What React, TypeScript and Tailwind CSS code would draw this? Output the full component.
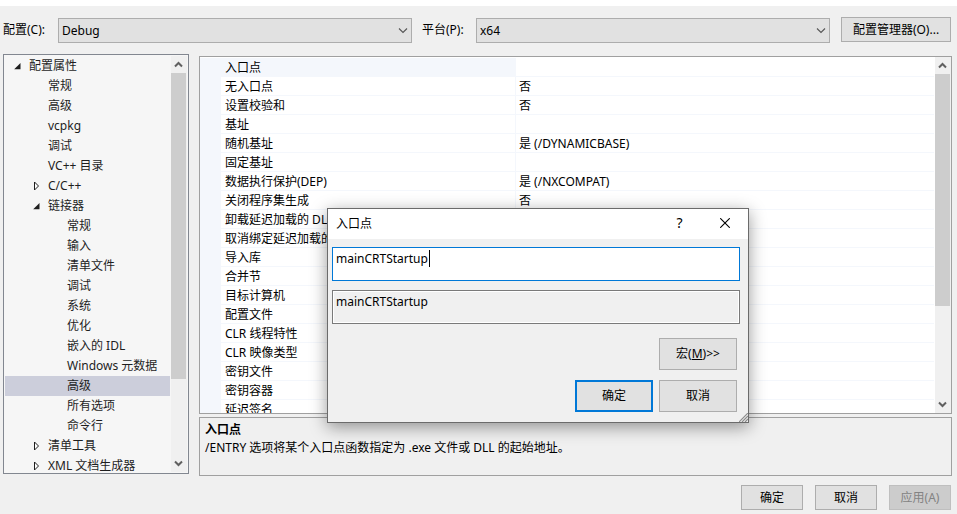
import clsx from 'clsx'

type TreeItem = {
  label: string
  level: 0 | 1 | 2
  state?: 'open' | 'closed'
  selected?: boolean
}

const treeItems: TreeItem[] = [
  { label: '配置属性', level: 0, state: 'open' },
  { label: '常规', level: 1 },
  { label: '高级', level: 1 },
  { label: 'vcpkg', level: 1 },
  { label: '调试', level: 1 },
  { label: 'VC++ 目录', level: 1 },
  { label: 'C/C++', level: 1, state: 'closed' },
  { label: '链接器', level: 1, state: 'open' },
  { label: '常规', level: 2 },
  { label: '输入', level: 2 },
  { label: '清单文件', level: 2 },
  { label: '调试', level: 2 },
  { label: '系统', level: 2 },
  { label: '优化', level: 2 },
  { label: '嵌入的 IDL', level: 2 },
  { label: 'Windows 元数据', level: 2 },
  { label: '高级', level: 2, selected: true },
  { label: '所有选项', level: 2 },
  { label: '命令行', level: 2 },
  { label: '清单工具', level: 1, state: 'closed' },
  { label: 'XML 文档生成器', level: 1, state: 'closed' },
]

const properties = [
  { name: '入口点', value: '' },
  { name: '无入口点', value: '否' },
  { name: '设置校验和', value: '否' },
  { name: '基址', value: '' },
  { name: '随机基址', value: '是 (/DYNAMICBASE)' },
  { name: '固定基址', value: '' },
  { name: '数据执行保护(DEP)', value: '是 (/NXCOMPAT)' },
  { name: '关闭程序集生成', value: '否' },
  { name: '卸载延迟加载的 DLL', value: '' },
  { name: '取消绑定延迟加载的 DLL', value: '' },
  { name: '导入库', value: '' },
  { name: '合并节', value: '' },
  { name: '目标计算机', value: '' },
  { name: '配置文件', value: '' },
  { name: 'CLR 线程特性', value: '' },
  { name: 'CLR 映像类型', value: '' },
  { name: '密钥文件', value: '' },
  { name: '密钥容器', value: '' },
  { name: '延迟签名', value: '' },
]

const indent = { 0: 'pl-[5px]', 1: 'pl-[24px]', 2: 'pl-[43px]' }

const buttonStyle = 'border border-[#adadad] bg-[#e1e1e1] text-black'

function ComboBox({ id, value }: { id: string; value: string }) {
  return (
    <div className="relative mt-px flex-1">
      <select
        id={id}
        className="block h-[25px] w-full appearance-none border border-[#adadad] bg-[#e1e1e1] px-[3px] text-black outline-none"
      >
        <option>{value}</option>
      </select>
      <svg
        className="pointer-events-none absolute top-[9px] right-[4px] h-[7px] w-[10px]"
        viewBox="0 0 10 7"
        fill="none"
        stroke="#555"
        strokeWidth="1.1"
      >
        <path d="M1 1.5 5 5.5 9 1.5" />
      </svg>
    </div>
  )
}

function TreeArrow({ state }: { state: 'open' | 'closed' }) {
  return (
    <svg className="h-[10px] w-[8px]" viewBox="0 0 8 10">
      {state === 'open' ? (
        <path d="M6.5 2v6.3H.2z" fill="#1e1e1e" />
      ) : (
        <path d="M1.5 1v8l4-4z" fill="#fff" stroke="#1e1e1e" />
      )}
    </svg>
  )
}

function ScrollBar({ thumb }: { thumb: string }) {
  return (
    <div className="flex w-[16px] shrink-0 flex-col bg-[#f0f0f0] pr-px">
      <button aria-label="向上滚动" className="flex h-[17px] shrink-0 items-center justify-center">
        <svg className="h-[7px] w-[9px]" viewBox="0 0 9 7" fill="none" stroke="#606060" strokeWidth="2">
          <path d="M1 5.5 4.5 2 8 5.5" />
        </svg>
      </button>
      <div className="flex-1">
        <div className={clsx('bg-[#cdcdcd]', thumb)} />
      </div>
      <button aria-label="向下滚动" className="flex h-[17px] shrink-0 items-center justify-center">
        <svg className="h-[7px] w-[9px]" viewBox="0 0 9 7" fill="none" stroke="#606060" strokeWidth="2">
          <path d="M1 1.5 4.5 5 8 1.5" />
        </svg>
      </button>
    </div>
  )
}

function PropertyTree() {
  return (
    <nav className="flex h-[420px] w-[186px] shrink-0 border border-[#828790] bg-[#f6f6f6] p-px">
      <ul className="mr-px flex-1 overflow-hidden text-[#1e1e1e]">
        {treeItems.map((item, i) => (
          <li
            key={i}
            className={clsx(
              'flex h-5 items-center whitespace-nowrap',
              indent[item.level],
              item.selected && 'bg-[#cccedb]',
            )}
          >
            <span className="flex w-[19px] shrink-0 pl-[4px]">
              {item.state && <TreeArrow state={item.state} />}
            </span>
            {item.label}
          </li>
        ))}
      </ul>
      <ScrollBar thumb="h-[306px]" />
    </nav>
  )
}

function PropertyGrid() {
  return (
    <div className="flex h-[358px] border border-[#a0a0a0] bg-white">
      <div className="mr-px flex-1 overflow-hidden pt-px">
        <table className="w-full table-fixed border-separate border-spacing-0">
          <colgroup>
            <col className="w-[21px]" />
            <col className="w-[295px]" />
            <col />
          </colgroup>
          <tbody>
            {properties.map((property, i) => (
              <tr key={property.name} className="h-[19px] leading-4">
                <td className="bg-[#f4f7fc] p-0" />
                <td
                  className={clsx(
                    'overflow-hidden border-r border-b border-[#f4f7fc] pt-[2px] pr-0 pb-0 pl-[4px] whitespace-nowrap',
                    i === 0 && 'bg-[#f4f7fc]',
                  )}
                >
                  {property.name}
                </td>
                <td className="border-b border-[#f4f7fc] pt-[2px] pr-0 pb-0 pl-[3px]">{property.value}</td>
              </tr>
            ))}
          </tbody>
        </table>
      </div>
      <ScrollBar thumb="h-[232px]" />
    </div>
  )
}

function EntryPointDialog() {
  return (
    <div
      role="dialog"
      aria-labelledby="dialog-title"
      className="absolute top-[208px] left-[327px] w-[422px] border border-[#6b6b6b] bg-[#f0f0f0] shadow-[0_4px_16px_rgba(0,0,0,0.4)]"
    >
      <div className="flex h-[30px] items-center bg-white pl-[8px]">
        <h2 id="dialog-title" className="flex-1">
          入口点
        </h2>
        <button aria-label="帮助" className="flex h-full w-[45px] items-center justify-center pb-[2px] text-sm">
          ?
        </button>
        <button aria-label="关闭" className="flex h-full w-[46px] items-center justify-center pb-[2px]">
          <svg className="h-[10px] w-[10px]" viewBox="0 0 10 10" stroke="#000" strokeWidth="1.1">
            <path d="M.2.2l9.6 9.6M9.8.2.2 9.8" />
          </svg>
        </button>
      </div>
      <div className="flex flex-col gap-[9px] pt-[8px] pr-[8px] pl-[4px]">
        <div className="relative">
          <textarea
            aria-label="入口点"
            defaultValue="mainCRTStartup"
            className="block h-[34px] w-full resize-none border border-[#0078d7] bg-white px-[3px] py-[3px] leading-4 outline-none"
          />
          <span className="absolute top-[3px] left-[97px] h-[17px] w-px bg-black" />
        </div>
        <textarea
          aria-label="计算的值"
          readOnly
          value="mainCRTStartup"
          className="block h-[34px] w-full resize-none border border-[#7a7a7a] bg-[#f0f0f0] px-[3px] py-[3px] leading-4 shadow-[inset_0_0_0_1px_#fff] outline-none"
        />
      </div>
      <div className="flex flex-col items-end gap-[10px] pt-[14px] pr-[11px] pb-[10px]">
        <button className={clsx(buttonStyle, 'h-8 w-[78px]')}>
          宏(<u>M</u>)&gt;&gt;
        </button>
        <div className="flex gap-[6px]">
          <button className="h-8 w-[78px] border-2 border-[#0078d7] bg-[#e1e1e1]">确定</button>
          <button className={clsx(buttonStyle, 'h-8 w-[78px]')}>取消</button>
        </div>
      </div>
      <svg
        className="absolute right-0 bottom-0 h-[9px] w-[9px]"
        viewBox="0 0 9 9"
        stroke="#8c8c8c"
        strokeWidth="1.2"
      >
        <path d="M0 9 9 0M3 9l6-6M6 9l3-3" />
      </svg>
    </div>
  )
}

export default function App() {
  return (
    <div className="relative min-h-screen overflow-hidden bg-[#f0f0f0] font-['Noto_Sans','Noto_Sans_CJK_SC',sans-serif] text-xs text-black">
      <div className="h-[6px] bg-white" />

      <div className="flex items-start pt-[11px] pr-[6px] pl-[3px]">
        <label htmlFor="configuration" className="w-[55px] shrink-0 leading-[25px]">
          配置(C):
        </label>
        <ComboBox id="configuration" value="Debug" />
        <label htmlFor="platform" className="ml-[10px] w-[54px] shrink-0 leading-[25px]">
          平台(P):
        </label>
        <ComboBox id="platform" value="x64" />
        <button className={clsx(buttonStyle, 'ml-[11px] h-[25px] w-[110px] shrink-0')}>
          配置管理器(O)...
        </button>
      </div>

      <main className="flex gap-[10px] pt-[11px] pr-[5px] pl-[3px]">
        <PropertyTree />
        <div className="flex min-w-0 flex-1 flex-col gap-[3px] pt-[2px]">
          <PropertyGrid />
          <section className="h-[59px] border border-[#a0a0a0] px-[5px] pt-[3px] leading-[18px]">
            <h2 className="font-bold">入口点</h2>
            <p>/ENTRY 选项将某个入口点函数指定为 .exe 文件或 DLL 的起始地址。</p>
          </section>
        </div>
      </main>

      <footer className="flex justify-end gap-[12px] pt-[9px] pr-[6px] pb-[4px]">
        <button className={clsx(buttonStyle, 'h-[25px] w-[62px]')}>确定</button>
        <button className={clsx(buttonStyle, 'h-[25px] w-[62px]')}>取消</button>
        <button disabled className="h-[25px] w-[62px] border border-[#bfbfbf] bg-[#cccccc] text-[#838383]">
          应用(A)
        </button>
      </footer>

      <EntryPointDialog />
    </div>
  )
}
